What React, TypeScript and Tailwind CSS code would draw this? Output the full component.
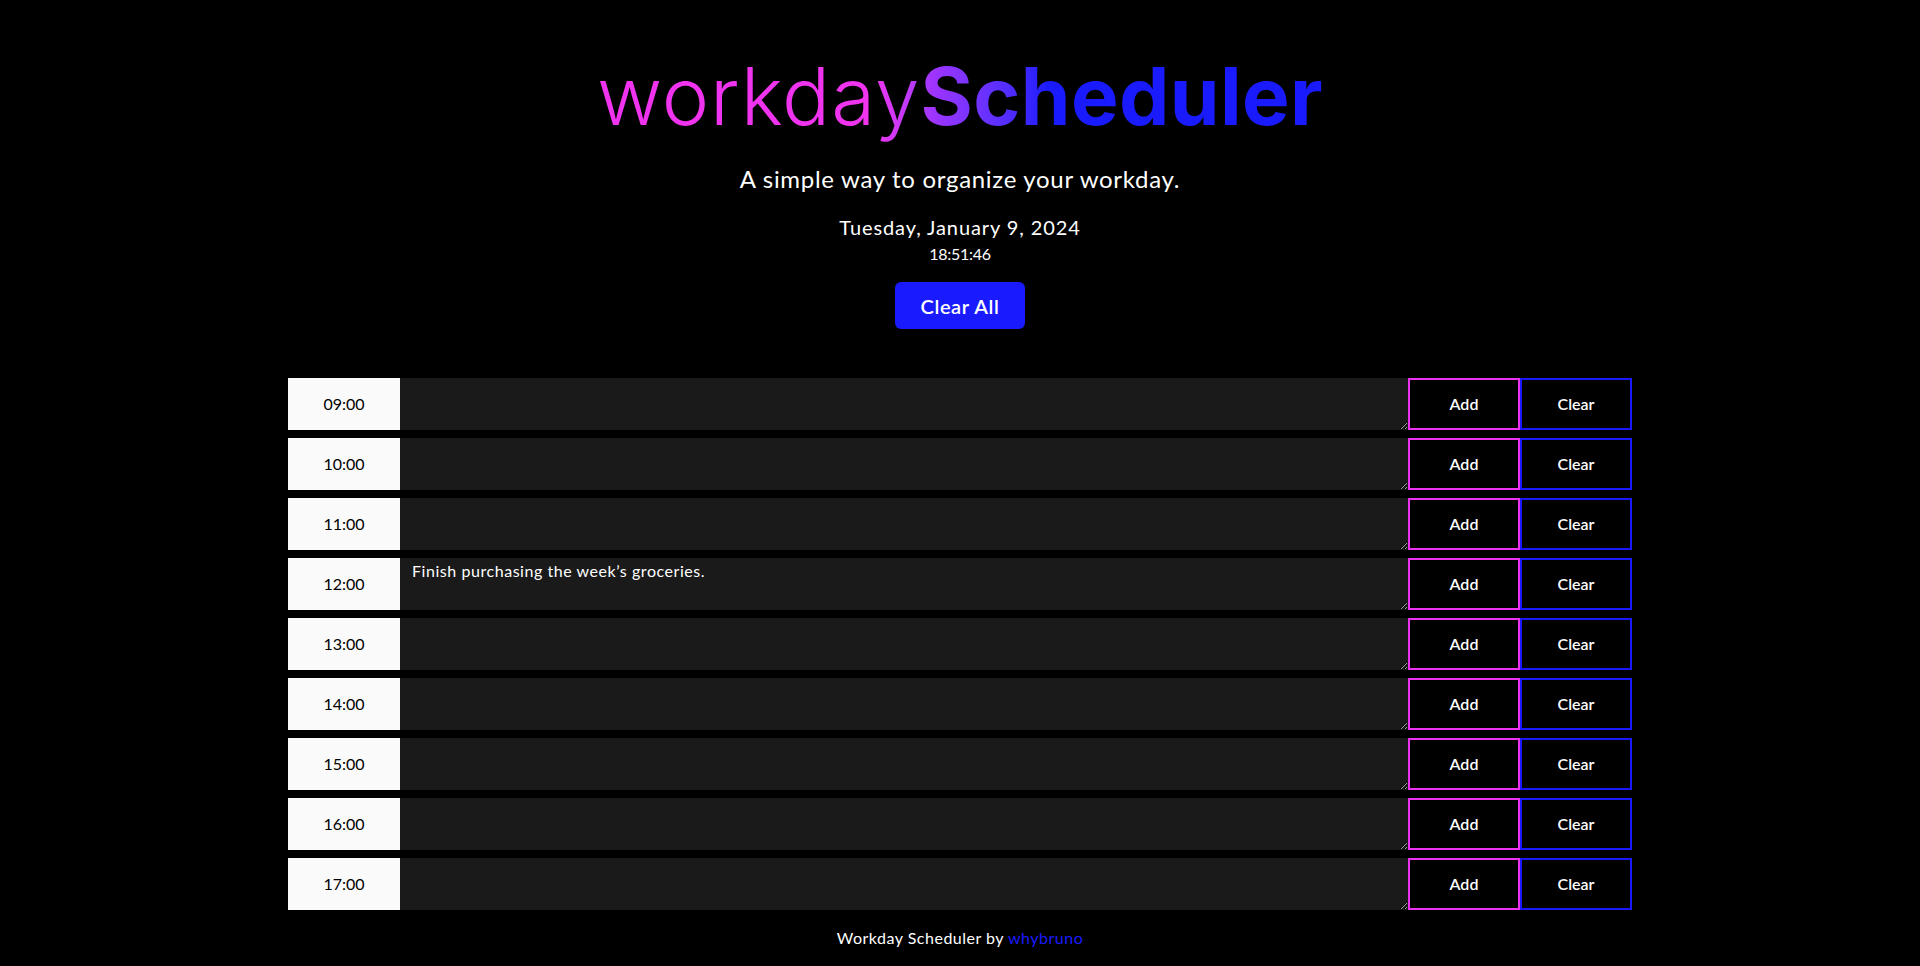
import { useState } from "react";

const hours = ["09:00", "10:00", "11:00", "12:00", "13:00", "14:00", "15:00", "16:00", "17:00"];

export default function App() {
  // saved notes per hour
  const [notes, setNotes] = useState<Record<string, string>>({
    "12:00": "Finish purchasing the week’s groceries.",
  });

  const setNote = (hour: string, value: string) => {
    setNotes((prev) => ({ ...prev, [hour]: value }));
  };

  return (
    <div className="min-h-screen bg-black text-white font-['Lato','Noto_Sans',sans-serif]">
      <header className="flex flex-col items-center pt-12">
        <h1 className="text-[80px] leading-[96px] tracking-[0.4px] font-['Inter',sans-serif] bg-linear-to-r from-[#ef33ef] from-38% via-[#9933ff] via-47% to-[#1a1aff] to-62% bg-clip-text text-transparent">
          <span className="font-light tracking-[1px]">workday</span>
          <span className="font-bold">Scheduler</span>
        </h1>
        <p className="mt-[19px] text-[24px] leading-[32px] tracking-[0.7px]">A simple way to organize your workday.</p>
        <p className="mt-[18px] text-[20px] leading-[28px] tracking-[0.9px]">Tuesday, January 9, 2024</p>
        <p className="mt-px text-[16px] leading-[24px] tracking-[-0.3px]">18:51:46</p>
        <button
          onClick={() => setNotes({})}
          className="mt-4 h-[47px] w-[130px] rounded-md bg-[#1a1aff] text-[20px] font-semibold tracking-[0.6px] text-white"
        >
          Clear All
        </button>
      </header>

      {/* Hour rows */}
      <main className="mx-auto mt-[49px] flex w-[1344px] flex-col gap-2">
        {hours.map((hour) => (
          <div key={hour} className="flex h-[52px]">
            <div className="flex w-[112px] items-center justify-center bg-[#fafafa] text-[16px] text-black">
              {hour}
            </div>
            <textarea
              value={notes[hour] || ""}
              onChange={(e) => setNote(hour, e.target.value)}
              className="h-full flex-1 bg-[#1a1a1a] px-3 py-[3px] text-[16px] leading-[20px] tracking-[0.55px] text-white outline-none"
            />
            <button className="w-[112px] border-2 border-[#ee33ee] bg-black text-[16px] font-semibold text-white">
              Add
            </button>
            <button
              onClick={() => setNote(hour, "")}
              className="w-[112px] border-2 border-[#1a1aff] bg-black text-[16px] font-semibold text-white"
            >
              Clear
            </button>
          </div>
        ))}
      </main>

      <footer className="mt-4 pb-4 text-center text-[16px] leading-[24px] tracking-[0.5px]">
        Workday Scheduler by <a href="#" className="text-[#1a1aff]">whybruno</a>
      </footer>
    </div>
  );
}
